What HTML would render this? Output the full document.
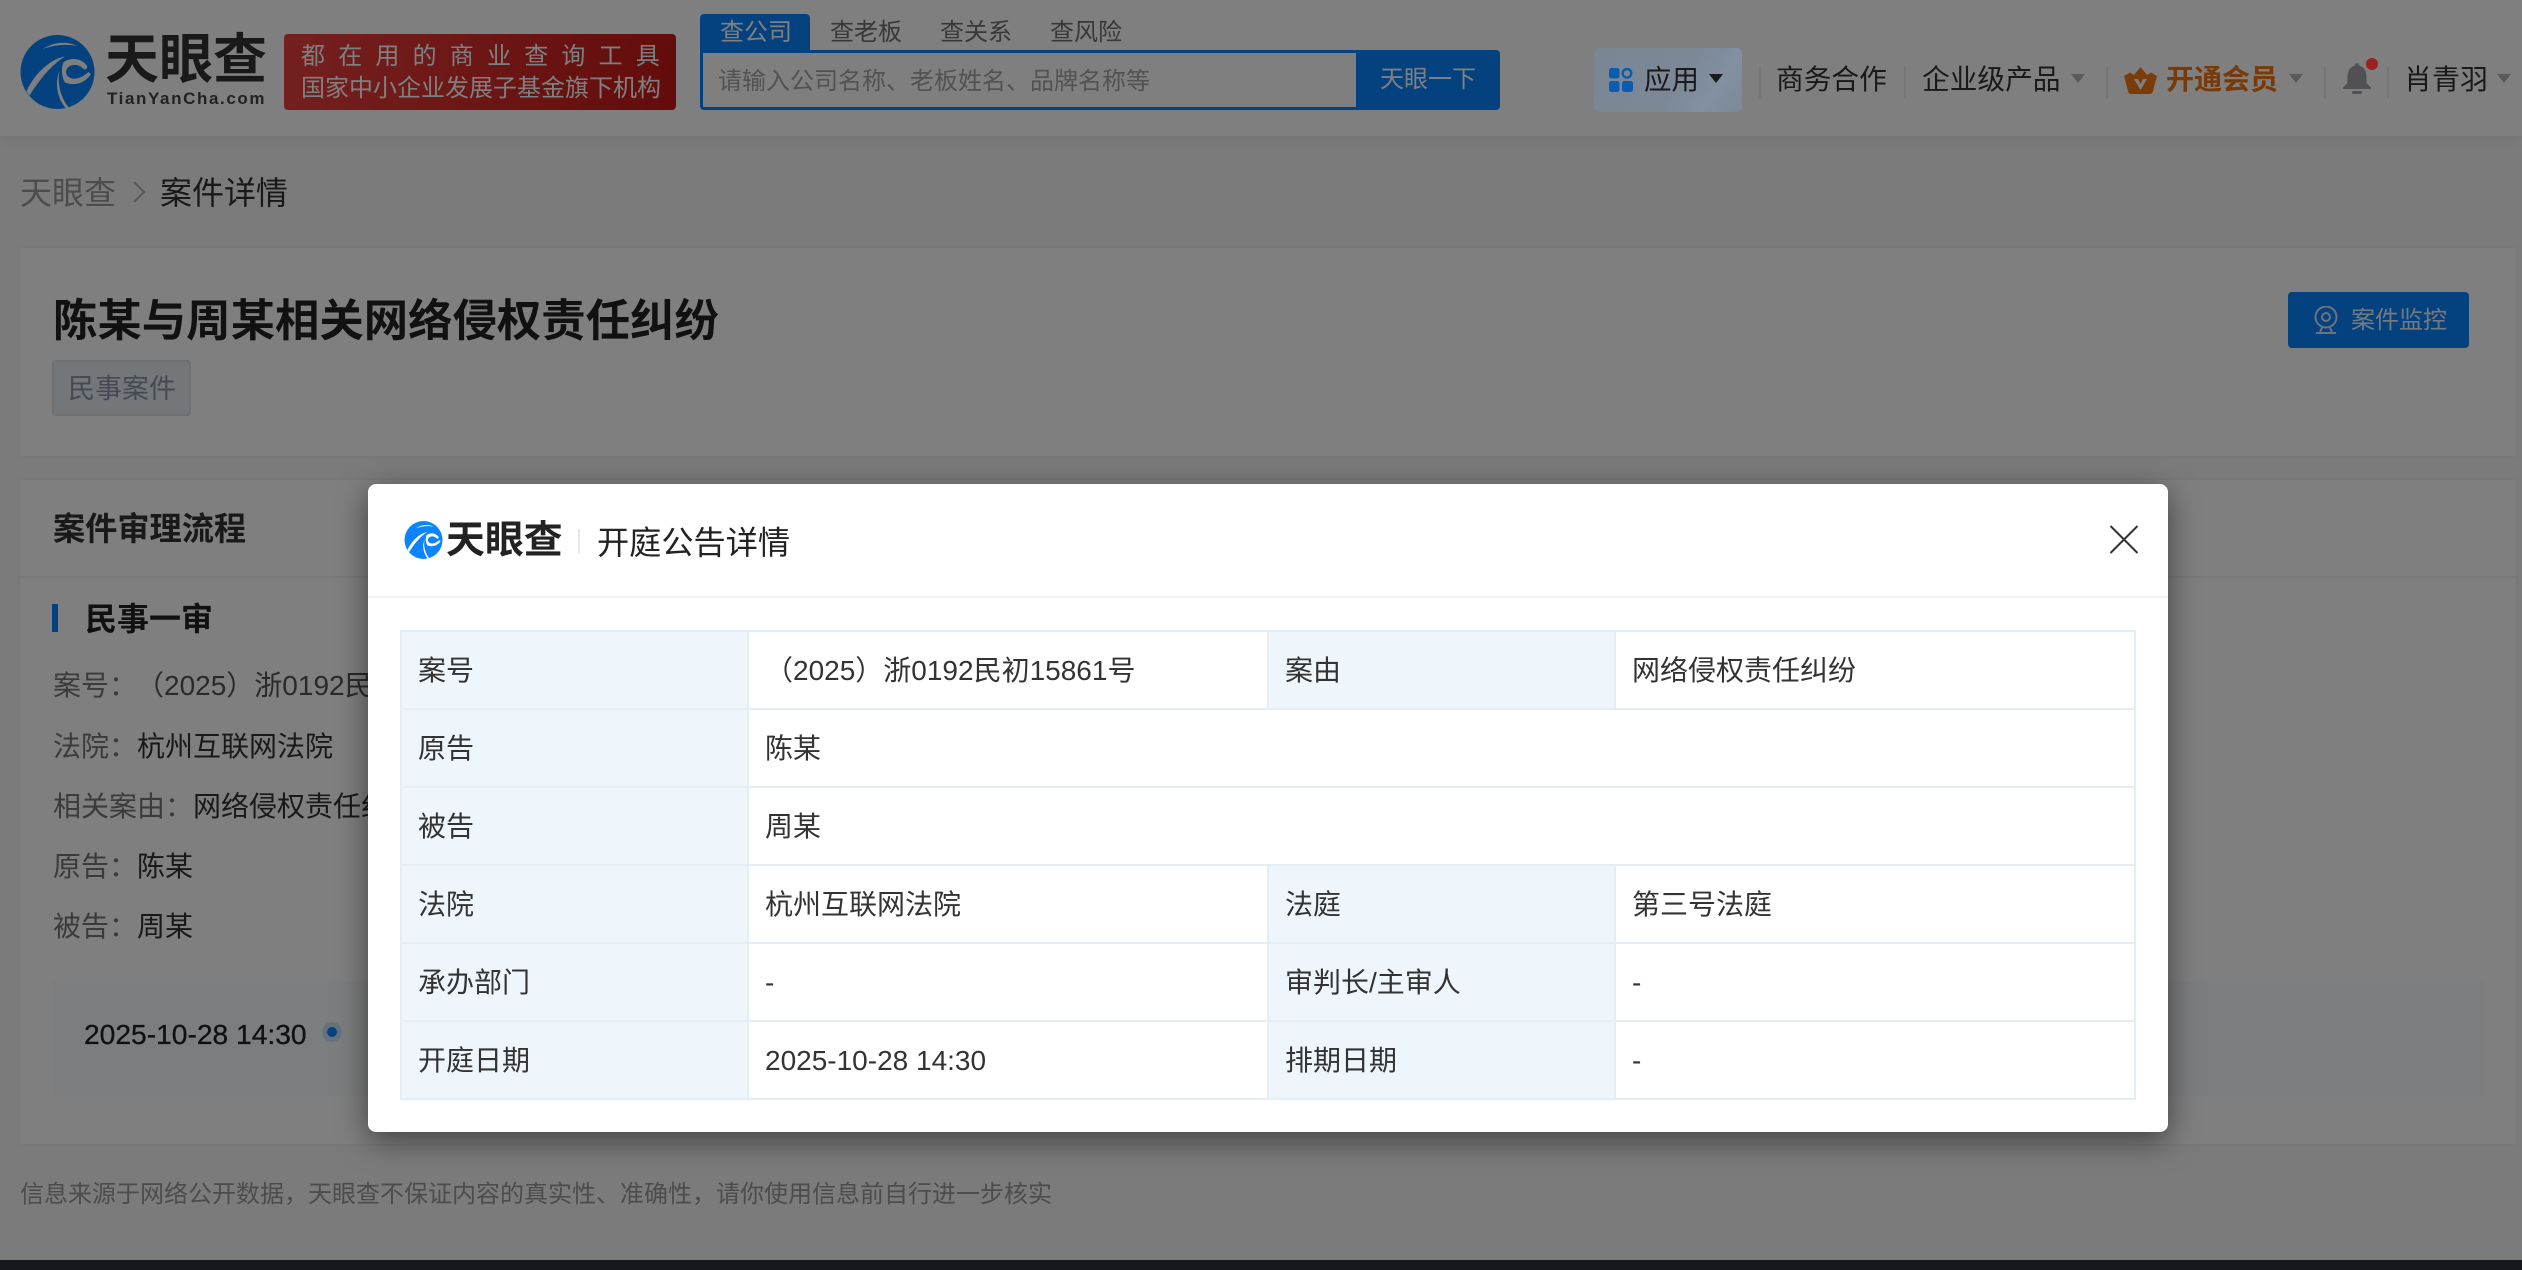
<!DOCTYPE html>
<html lang="zh-CN">
<head>
<meta charset="utf-8">
<title>案件详情</title>
<style>
html,body{margin:0;padding:0;width:2522px;height:1270px;overflow:hidden;background:#f6f6f6;font-family:"Liberation Sans","Noto Sans CJK SC",sans-serif;color:#333}
*{box-sizing:border-box}
.t{position:absolute;white-space:nowrap;line-height:40px;height:40px}
.a{position:absolute}
.sep{position:absolute;top:66px;width:2px;height:32px;background:#eee}
.arr{position:absolute;width:0;height:0;border-left:7px solid transparent;border-right:7px solid transparent;border-top:9px solid #b5b5b5;top:74px}
table{position:absolute;left:400px;top:630px;width:1734px;border-collapse:collapse;table-layout:fixed;font-size:28px;color:#333}
td{border:2px solid #e4eef7;padding:2px 0 0 16px;height:78px;vertical-align:middle;line-height:36px}
td.l{background:#eef5fb}
</style>
</head>
<body>
<svg width="0" height="0" style="position:absolute"><defs>
<symbol id="sw" viewBox="0 0 100 100">
<path fill="#fff" d="M30 19C46 9 63 8 77 15C63 12 46 13 30 19Z"/>
<path fill="#fff" d="M8 76C20 50 42 32 60 29C46 38 31 52 12 82Z"/>
<path fill="#fff" d="M58 37C68 29 84 32 90 42C90 47 87 47 85 46C80 40 70 38 64 44C59 50 62 57 70 59C78 60 85 56 92 50L95 53C88 64 74 70 60 64C55 55 55 45 58 37Z"/>
<path fill="#fff" d="M53 48C49 64 54 85 66 99L62 100C49 85 46 64 53 48Z"/>
</symbol>
</defs></svg>

<!-- page -->
<div class="a" style="left:0;top:0;width:2522px;height:136px;background:#fff;box-shadow:0 2px 14px rgba(0,0,0,.07)"></div>

<svg class="a" style="left:20px;top:35px" width="75" height="74" viewBox="0 0 100 100"><ellipse cx="50" cy="50" rx="50" ry="50" fill="#0884ff"/><use href="#sw" width="100" height="100"/></svg>
<div class="t" style="left:105px;top:30px;font-size:54px;font-weight:700;color:#333;height:60px;line-height:60px;letter-spacing:0">天眼查</div>
<div class="t" style="left:107px;top:88px;font-size:17px;font-weight:700;color:#444;height:22px;line-height:22px;letter-spacing:1.6px">TianYanCha.com</div>

<div class="a" style="left:284px;top:34px;width:392px;height:76px;border-radius:4px;background:linear-gradient(100deg,#ea4040,#c81818)"></div>
<div class="t" style="left:301px;top:37px;font-size:24px;color:#fff;letter-spacing:13.2px">都在用的商业查询工具</div>
<div class="t" style="left:301px;top:69px;font-size:24px;color:#fff">国家中小企业发展子基金旗下机构</div>

<div class="a" style="left:700px;top:14px;width:110px;height:38px;background:#0884ff;border-radius:4px 4px 0 0"></div>
<div class="t" style="left:720px;top:13px;font-size:24px;color:#fff">查公司</div>
<div class="t" style="left:830px;top:13px;font-size:24px;color:#707070">查老板</div>
<div class="t" style="left:940px;top:13px;font-size:24px;color:#707070">查关系</div>
<div class="t" style="left:1050px;top:13px;font-size:24px;color:#707070">查风险</div>
<div class="a" style="left:700px;top:50px;width:800px;height:60px;border:3px solid #0884ff;border-radius:0 4px 4px 4px;background:#fff"></div>
<div class="a" style="left:1356px;top:50px;width:144px;height:60px;background:#0884ff;border-radius:0 4px 4px 0"></div>
<div class="t" style="left:718px;top:62px;font-size:24px;color:#a4a4a4">请输入公司名称、老板姓名、品牌名称等</div>
<div class="t" style="left:1380px;top:60px;font-size:24px;color:#fff">天眼一下</div>

<div class="sep" style="left:1759px"></div>
<div class="t" style="left:1776px;top:60px;font-size:27.7px;color:#333">商务合作</div>
<div class="sep" style="left:1904px"></div>
<div class="t" style="left:1922px;top:60px;font-size:27.7px;color:#333">企业级产品</div>
<div class="arr" style="left:2071px"></div>
<div class="sep" style="left:2106px"></div>
<svg class="a" style="left:2124px;top:67px" width="33" height="27" viewBox="0 0 33 27"><path fill="#f47a12" d="M16.5 0L23 8L27 5.500L33 9L29 24C28.600 26 27.500 27 26 27H7C5.500 27 4.400 26 4 24L0 9L6 5.500L10 8Z"/><path fill="#fff" d="M10 12H14L16.500 17L19 12H23L16.500 23Z"/></svg>
<div class="t" style="left:2166px;top:60px;font-size:28px;color:#f07410;font-weight:700">开通会员</div>
<div class="arr" style="left:2289px"></div>
<div class="sep" style="left:2324px"></div>
<svg class="a" style="left:2343px;top:63px" width="28" height="31" viewBox="0 0 28 31"><path fill="#a2a2a6" d="M14 0C15.200 0 16 1 16 2.500C21 4 23.500 8 23.500 13V19C23.500 21 26 22.500 28 24.500V26H0V24.500C2 22.500 4.500 21 4.500 19V13C4.500 8 7 4 12 2.500C12 1 12.800 0 14 0Z"/><rect x="9" y="28" width="10" height="3" rx="1.500" fill="#a2a2a6"/></svg>
<div class="sep" style="left:2387px"></div>
<div class="t" style="left:2404px;top:60px;font-size:28px;color:#333">肖青羽</div>
<div class="arr" style="left:2497px"></div>

<div class="t" style="left:20px;top:173px;font-size:32px;color:#999">天眼查</div>
<svg class="a" style="left:132px;top:181px" width="14" height="22" viewBox="0 0 14 22"><path d="M2 1L12 11L2 21" fill="none" stroke="#aaa" stroke-width="1.800"/></svg>
<div class="t" style="left:160px;top:173px;font-size:32px;color:#333">案件详情</div>

<div class="a" style="left:20px;top:248px;width:2496px;height:208px;background:#fff;box-shadow:0 0 3px rgba(0,0,0,.06)"></div>
<div class="t" style="left:53px;top:296.500px;font-size:44.400px;font-weight:700;color:#222;height:50px;line-height:50px">陈某与周某相关网络侵权责任纠纷</div>
<div class="a" style="left:52px;top:360px;width:139px;height:56px;background:#e8eef5;border:2px solid #d8e0ea;border-radius:4px"></div>
<div class="t" style="left:68px;top:369px;font-size:27px;color:#8a94a4">民事案件</div>
<div class="a" style="left:2288px;top:292px;width:181px;height:56px;background:#0884ff;border-radius:4px"></div>
<svg class="a" style="left:2313px;top:306px" width="26" height="28" viewBox="0 0 26 28" fill="none" stroke="#d6e8fb" stroke-width="2"><circle cx="13" cy="11" r="10.500"/><circle cx="13" cy="11" r="4"/><path d="M9 22L7 26M17 22L19 26M3 27H23"/></svg>
<div class="t" style="left:2351px;top:300.500px;font-size:24px;color:#e6f2ff">案件监控</div>

<div class="a" style="left:20px;top:480px;width:2496px;height:664px;background:#fff;box-shadow:0 0 3px rgba(0,0,0,.06)"></div>
<div class="t" style="left:53px;top:509px;font-size:32.200px;font-weight:700;color:#333">案件审理流程</div>
<div class="a" style="left:20px;top:576px;width:2496px;height:2px;background:#f2f2f2"></div>
<div class="a" style="left:52px;top:604px;width:6px;height:28px;background:#0884ff"></div>
<div class="t" style="left:85px;top:598.500px;font-size:32px;font-weight:700;color:#222">民事一审</div>
<div class="t" style="left:53px;top:666px;font-size:28px;color:#777">案号：<span style="color:#555;margin-left:13px">（2025）浙0192民初15861号</span></div>
<div class="t" style="left:53px;top:726.500px;font-size:28px;color:#777">法院：<span style="color:#333">杭州互联网法院</span></div>
<div class="t" style="left:53px;top:786.500px;font-size:28px;color:#777">相关案由：<span style="color:#333">网络侵权责任纠纷</span></div>
<div class="t" style="left:53px;top:846.500px;font-size:28px;color:#777">原告：<span style="color:#333">陈某</span></div>
<div class="t" style="left:53px;top:906.500px;font-size:28px;color:#777">被告：<span style="color:#333">周某</span></div>

<div class="a" style="left:53px;top:981px;width:2431px;height:115px;background:#f8fafd"></div>
<div class="t" style="left:84px;top:1014px;font-size:28.200px;color:#222;-webkit-text-stroke:.3px #222">2025-10-28 14:30</div>
<div class="a" style="left:322px;top:1022px;width:20px;height:20px;border-radius:50%;background:#cfe3fa"></div>
<div class="a" style="left:327px;top:1027px;width:10px;height:10px;border-radius:50%;background:#0884ff"></div>

<div class="t" style="left:20px;top:1175px;font-size:24px;color:#999">信息来源于网络公开数据，天眼查不保证内容的真实性、准确性，请你使用信息前自行进一步核实</div>
<div class="a" style="left:0;top:1260px;width:2522px;height:10px;background:#2a333b"></div>

<!-- overlay -->
<div class="a" style="left:0;top:0;width:2522px;height:1270px;background:rgba(0,0,0,.5)"></div>

<!-- tile sits above overlay colours -->
<div class="a" style="left:1594px;top:48px;width:148px;height:64px;border-radius:5px;background:linear-gradient(125deg,#7a8694 0%,#7c8896 55%,#8290a2 78%,#7d8998 100%)"></div>
<svg class="a" style="left:1609px;top:68px" width="24" height="24" viewBox="0 0 24 24"><rect x="0" y="0" width="10.500" height="10.500" rx="2.500" fill="#0a5cae"/><circle cx="18" cy="5.300" r="4.300" fill="none" stroke="#0a5cae" stroke-width="2.400"/><rect x="0" y="13" width="10.500" height="11" rx="2.500" fill="#0a5cae"/><rect x="13" y="13" width="11" height="11" rx="2.500" fill="#0a5cae"/></svg>
<div class="t" style="left:1644px;top:60px;font-size:27.500px;color:#1a1a1a">应用</div>
<div class="a" style="left:1709px;top:74px;width:0;height:0;border-left:7px solid transparent;border-right:7px solid transparent;border-top:9px solid #1a1a1a"></div>
<div class="a" style="left:2366px;top:58px;width:12px;height:12px;border-radius:50%;background:#a02020"></div>

<!-- modal -->
<div class="a" style="left:368px;top:484px;width:1800px;height:648px;background:#fff;border-radius:8px;box-shadow:0 8px 30px rgba(0,0,0,.5)"></div>
<svg class="a" style="left:404px;top:521px" width="39" height="38" viewBox="0 0 100 100"><ellipse cx="50" cy="50" rx="50" ry="50" fill="#0a84ff"/><use href="#sw" width="100" height="100"/></svg>
<div class="t" style="left:446px;top:519px;font-size:38.900px;font-weight:700;color:#222;height:44px;line-height:44px">天眼查</div>
<div class="a" style="left:578px;top:529px;width:2px;height:24px;background:#e4e8ec"></div>
<div class="t" style="left:597px;top:522.500px;font-size:32.200px;color:#222">开庭公告详情</div>
<svg class="a" style="left:2109px;top:525px" width="30" height="29" viewBox="0 0 30 29"><path d="M1.500 1L28.500 28M28.500 1L1.500 28" stroke="#333" stroke-width="2" fill="none"/></svg>
<div class="a" style="left:368px;top:596px;width:1800px;height:2px;background:#f2f3f5"></div>

<table>
<colgroup><col style="width:347px"><col style="width:520px"><col style="width:347px"><col style="width:520px"></colgroup>
<tr><td class="l">案号</td><td>（2025）浙0192民初15861号</td><td class="l">案由</td><td>网络侵权责任纠纷</td></tr>
<tr><td class="l">原告</td><td colspan="3">陈某</td></tr>
<tr><td class="l">被告</td><td colspan="3">周某</td></tr>
<tr><td class="l">法院</td><td>杭州互联网法院</td><td class="l">法庭</td><td>第三号法庭</td></tr>
<tr><td class="l">承办部门</td><td>-</td><td class="l">审判长/主审人</td><td>-</td></tr>
<tr><td class="l">开庭日期</td><td>2025-10-28 14:30</td><td class="l">排期日期</td><td>-</td></tr>
</table>
</body>
</html>
